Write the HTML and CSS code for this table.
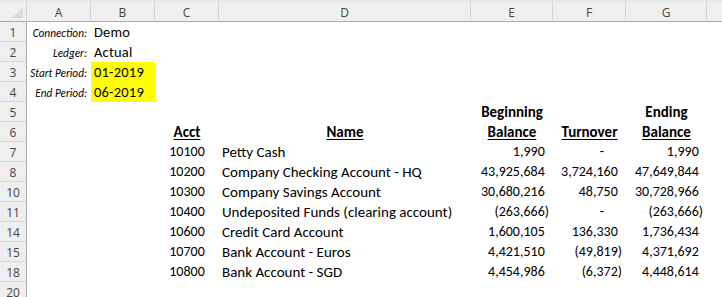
FILE: index.html
```html
<!DOCTYPE html>
<html>
<head>
<meta charset="utf-8">
<link rel="stylesheet" href="styles.css">
</head>
<body>
<div class="sheet">
  <div class="corner"><span class="tri"></span></div>
  <div class="ch">A</div><div class="ch">B</div><div class="ch">C</div><div class="ch">D</div><div class="ch">E</div><div class="ch">F</div><div class="ch">G</div><div class="ch last"></div>

  <div class="rh">1</div><div class="c lbl">Connection:</div><div class="c val">Demo</div><div class="c"></div><div class="c"></div><div class="c"></div><div class="c"></div><div class="c"></div><div class="c"></div>
  <div class="rh">2</div><div class="c lbl">Ledger:</div><div class="c val">Actual</div><div class="c"></div><div class="c"></div><div class="c"></div><div class="c"></div><div class="c"></div><div class="c"></div>
  <div class="rh">3</div><div class="c lbl">Start Period:</div><div class="c val hl">01-2019</div><div class="c"></div><div class="c"></div><div class="c"></div><div class="c"></div><div class="c"></div><div class="c"></div>
  <div class="rh">4</div><div class="c lbl">End Period:</div><div class="c val hl">06-2019</div><div class="c"></div><div class="c"></div><div class="c"></div><div class="c"></div><div class="c"></div><div class="c"></div>
  <div class="rh">5</div><div class="c"></div><div class="c"></div><div class="c"></div><div class="c"></div><div class="c hd">Beginning</div><div class="c"></div><div class="c hd">Ending</div><div class="c"></div>
  <div class="rh">6</div><div class="c"></div><div class="c"></div><div class="c hd"><u>Acct</u></div><div class="c hd"><u>Name</u></div><div class="c hd"><u>Balance</u></div><div class="c hd"><u>Turnover</u></div><div class="c hd"><u>Balance</u></div><div class="c"></div>

  <div class="rh">7</div><div class="c"></div><div class="c"></div><div class="c ctr">10100</div><div class="c name">Petty Cash</div><div class="c num">1,990<i>)</i></div><div class="c num dash">-</div><div class="c num">1,990<i>)</i></div><div class="c"></div>
  <div class="rh">8</div><div class="c"></div><div class="c"></div><div class="c ctr">10200</div><div class="c name">Company Checking Account - HQ</div><div class="c num">43,925,684<i>)</i></div><div class="c num">3,724,160<i>)</i></div><div class="c num">47,649,844<i>)</i></div><div class="c"></div>
  <div class="rh">10</div><div class="c"></div><div class="c"></div><div class="c ctr">10300</div><div class="c name">Company Savings Account</div><div class="c num">30,680,216<i>)</i></div><div class="c num">48,750<i>)</i></div><div class="c num">30,728,966<i>)</i></div><div class="c"></div>
  <div class="rh">11</div><div class="c"></div><div class="c"></div><div class="c ctr">10400</div><div class="c name">Undeposited Funds (clearing account)</div><div class="c num">(263,666)</div><div class="c num dash">-</div><div class="c num">(263,666)</div><div class="c"></div>
  <div class="rh">14</div><div class="c"></div><div class="c"></div><div class="c ctr">10600</div><div class="c name">Credit Card Account</div><div class="c num">1,600,105<i>)</i></div><div class="c num">136,330<i>)</i></div><div class="c num">1,736,434<i>)</i></div><div class="c"></div>
  <div class="rh">15</div><div class="c"></div><div class="c"></div><div class="c ctr">10700</div><div class="c name">Bank Account - Euros</div><div class="c num">4,421,510<i>)</i></div><div class="c num">(49,819)</div><div class="c num">4,371,692<i>)</i></div><div class="c"></div>
  <div class="rh">18</div><div class="c"></div><div class="c"></div><div class="c ctr">10800</div><div class="c name">Bank Account - SGD</div><div class="c num">4,454,986<i>)</i></div><div class="c num">(6,372)</div><div class="c num">4,448,614<i>)</i></div><div class="c"></div>
  <div class="rh">20</div><div class="c"></div><div class="c"></div><div class="c"></div><div class="c"></div><div class="c"></div><div class="c"></div><div class="c"></div><div class="c"></div>
</div>
</body>
</html>
```

FILE: styles.css
```css
html, body {
  margin: 0;
  padding: 0;
  background: #ffffff;
  overflow: hidden;
}
.sheet {
  display: grid;
  grid-template-columns: 27px 64px 64px 64px 252px 82px 73px 81px 1fr;
  grid-template-rows: 22px;
  grid-auto-rows: 20px;
  width: 722px;
  font-family: "Carlito", "Lato", sans-serif;
  font-size: 14px;
  color: #000;
}
.corner {
  background: #efefef;
  border-top: 2px solid #e4e6e9;
  border-right: 1px solid #d5d5d5;
  border-bottom: 1px solid #ababab;
  box-sizing: border-box;
  position: relative;
}
.tri {
  position: absolute;
  right: 3px;
  bottom: 3px;
  width: 0;
  height: 0;
  border-left: 11px solid transparent;
  border-bottom: 11px solid #dadada;
}
.ch {
  background: #efefef;
  border-top: 2px solid #e4e6e9;
  border-right: 1px solid #d5d5d5;
  border-bottom: 1px solid #ababab;
  box-sizing: border-box;
  font-family: "Open Sans", "Noto Sans", sans-serif;
  font-size: 12px;
  color: #444;
  display: flex;
  align-items: center;
  justify-content: center;
  padding-top: 1px;
}
.ch.last { border-right: none; }
.rh {
  background: #efefef;
  border-right: 1px solid #ababab;
  border-bottom: 1px solid #d5d5d5;
  box-sizing: border-box;
  font-family: "Open Sans", "Noto Sans", sans-serif;
  font-size: 12px;
  color: #444;
  display: flex;
  align-items: center;
  justify-content: center;
  padding-top: 1px;
}
.c {
  display: flex;
  align-items: flex-end;
  padding: 0 3px 1px 3px;
  white-space: nowrap;
  line-height: 18px;
  box-sizing: border-box;
  min-width: 0;
}
.lbl {
  justify-content: flex-end;
  font-style: italic;
  font-size: 11.3px;
  padding-right: 4px;
  padding-bottom: 0;
}
.val { font-size: 14.5px; letter-spacing: 0.2px; }
.hl { background: #ffff00; }
.hd {
  justify-content: center;
  font-weight: bold;
  font-size: 15px;
}
.hd u { text-decoration-thickness: 1px; text-underline-offset: 2px; }
.ctr { justify-content: center; }
.name { justify-content: flex-start; font-size: 15px; }
.num { justify-content: flex-end; padding-right: 4px; }
.num i { visibility: hidden; font-style: normal; }
.dash { padding-right: 22px; }
```
